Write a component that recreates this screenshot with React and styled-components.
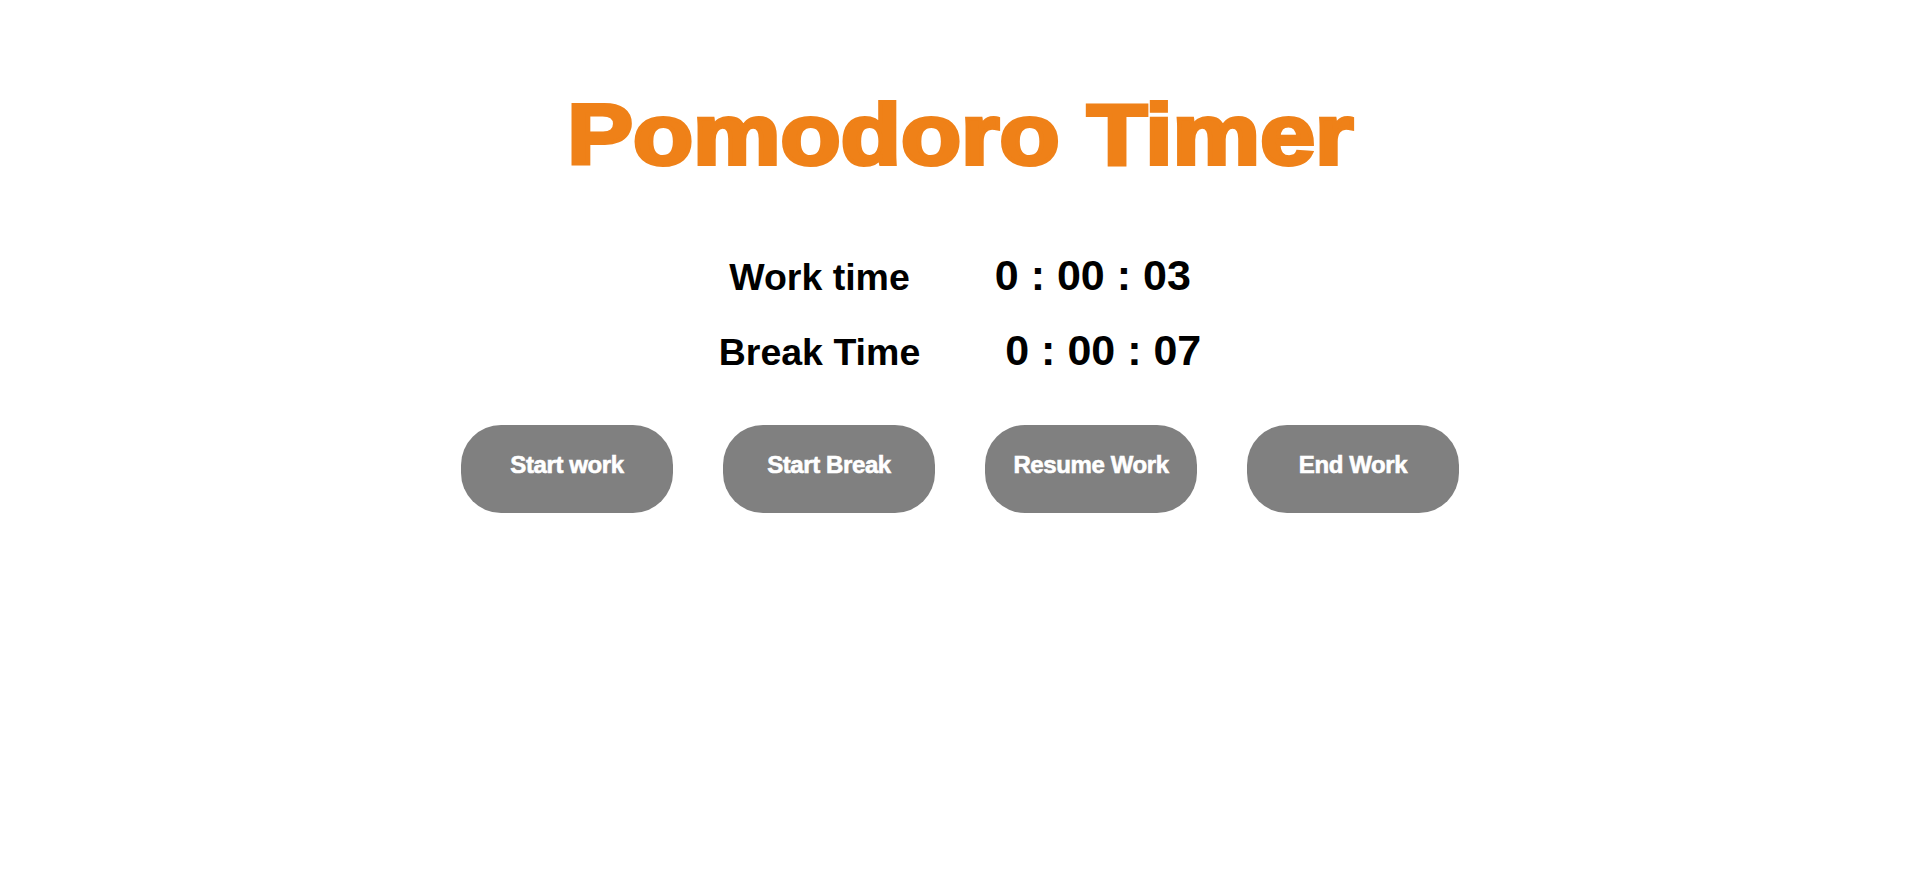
import React, { useState } from "react";
import styled, { createGlobalStyle } from "styled-components";

const GlobalStyle = createGlobalStyle`
  html, body {
    margin: 0;
    padding: 0;
    background: #ffffff;
  }
  body {
    font-family: "Liberation Sans", Arial, sans-serif;
  }
`;

const formatTime = (secs) => {
  const h = Math.floor(secs / 3600);
  const m = Math.floor((secs % 3600) / 60);
  const s = secs % 60;
  return `${h} : ${String(m).padStart(2, "0")} : ${String(s).padStart(2, "0")}`;
};

const App = () => {
  const [workSeconds] = useState(3);
  const [breakSeconds] = useState(7);

  return (
    <Layout>
      <GlobalStyle />
      <Title>Pomodoro Timer</Title>
      <Rows>
        <Row>
          <Label>Work time</Label>
          <Clock>{formatTime(workSeconds)}</Clock>
        </Row>
        <Row>
          <Label>Break Time</Label>
          <Clock>{formatTime(breakSeconds)}</Clock>
        </Row>
      </Rows>
      <Buttons>
        <Button>Start work</Button>
        <Button>Start Break</Button>
        <Button>Resume Work</Button>
        <Button>End Work</Button>
      </Buttons>
    </Layout>
  );
};

const Layout = styled.div`
  display: flex;
  flex-direction: column;
  align-items: center;
  width: 100%;
  min-height: 884px;
  padding-top: 84px;
  box-sizing: border-box;
`;

// heavy, wide face: bold + stroke, stretched sideways
const Title = styled.h1`
  margin: 0;
  font-family: "Liberation Sans", Arial, sans-serif;
  font-weight: 700;
  font-size: 86px;
  line-height: 100px;
  color: #ef8118;
  -webkit-text-stroke: 4px #ef8118;
  transform: scaleX(1.145);
`;

const Rows = styled.div`
  display: flex;
  flex-direction: column;
  gap: 25px;
  margin-top: 66px;
`;

const Row = styled.div`
  display: flex;
  align-items: baseline;
  justify-content: center;
  gap: 85px;
  height: 50px;
`;

const Label = styled.span`
  font-weight: 700;
  font-size: 37.5px;
  line-height: 50px;
  color: #000000;
`;

const Clock = styled.span`
  font-weight: 700;
  font-size: 43px;
  line-height: 50px;
  color: #000000;
`;

const Buttons = styled.div`
  display: flex;
  gap: 50px;
  margin-top: 50px;
`;

const Button = styled.button`
  width: 212px;
  height: 88px;
  border: none;
  border-radius: 40px;
  background-color: #808080;
  color: #ffffff;
  font-family: "Liberation Sans", Arial, sans-serif;
  font-weight: 700;
  font-size: 24px;
  letter-spacing: -0.4px;
  -webkit-text-stroke: 0.6px #ffffff;
  padding: 0 0 8px;
  cursor: pointer;

  &:hover {
    background: #737373;
  }
`;

export default App;
